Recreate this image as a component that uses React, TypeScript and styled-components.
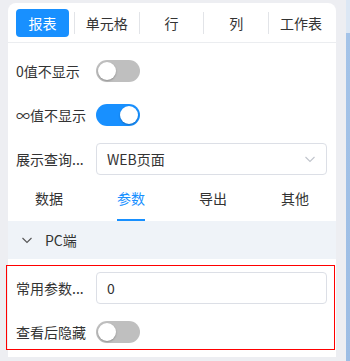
import React, { useState } from 'react';
import styled, { createGlobalStyle } from 'styled-components';

const GlobalStyle = createGlobalStyle`
  html, body {
    margin: 0;
    padding: 0;
    background: #edeef2;
    font-family: "Noto Sans CJK SC", "Noto Sans", sans-serif;
    font-size: 14px;
    color: #333;
  }
`;

const Page = styled.div`
  display: flex;
  height: 361px;
  padding: 3px 0 0 8px;
  box-sizing: border-box;
  overflow: hidden;
`;

const Card = styled.div`
  width: 328px;
  height: 354px;
  background: #fff;
  border-radius: 8px 8px 0 0;
  flex-shrink: 0;
`;

const Strip = styled.div`
  width: 4px;
  margin: -3px 0 0 10px;
  background: linear-gradient(#dce7f4 0, #dce7f4 33px, #a4c3e8 33px, #9dbde4 100%);
`;

const TopTabs = styled.div`
  display: flex;
  align-items: center;
  height: 39px;
  padding: 0 3px 0 1px;
  border-bottom: 1px solid #ebedf0;
`;

const TabCell = styled.div<{ $active?: boolean; $divider?: boolean }>`
  flex: 0 0 20%;
  box-sizing: border-box;
  height: ${({ $active }) => ($active ? '28px' : '22px')};
  padding: ${({ $active }) => ($active ? '0 5px 0 7px' : '0')};
  display: flex;
  border-left: ${({ $divider }) => ($divider ? '1px solid #e2e4e8' : 'none')};
`;

const TabButton = styled.div<{ $active?: boolean }>`
  flex: 1;
  display: flex;
  align-items: center;
  justify-content: center;
  border-radius: 4px;
  background: ${({ $active }) => ($active ? '#1890ff' : 'transparent')};
  color: ${({ $active }) => ($active ? '#fff' : '#333')};
`;

const Form = styled.div`
  padding: 12px 9px 0 8px;
`;

const Row = styled.div<{ $last?: boolean }>`
  display: flex;
  align-items: center;
  height: 32px;
  margin-bottom: ${({ $last }) => ($last ? '0' : '12px')};
`;

const Label = styled.div`
  width: 72px;
  margin-right: 8px;
  white-space: nowrap;
`;

const SwitchTrack = styled.button<{ $on: boolean }>`
  position: relative;
  width: 44px;
  height: 22px;
  border: none;
  padding: 0;
  border-radius: 11px;
  background: ${({ $on }) => ($on ? '#1890ff' : '#bfbfbf')};
  cursor: pointer;
`;

const Knob = styled.span<{ $on: boolean }>`
  position: absolute;
  top: 2px;
  left: ${({ $on }) => ($on ? '24px' : '2px')};
  width: 18px;
  height: 18px;
  border-radius: 50%;
  background: #fff;
  box-shadow: 0 1px 2px rgba(0, 0, 0, 0.25);
`;

const Field = styled.div`
  flex: 1;
  height: 32px;
  box-sizing: border-box;
  border: 1px solid #dcdfe6;
  border-radius: 4px;
  display: flex;
  align-items: center;
  justify-content: space-between;
  padding: 0 10px;
  color: #333;
`;

const SubTabs = styled.div`
  display: flex;
  height: 44px;
  margin-top: -10px;
`;

const SubTab = styled.div`
  flex: 1;
  display: flex;
  justify-content: center;
`;

const SubTabLabel = styled.span<{ $active?: boolean }>`
  display: flex;
  align-items: center;
  color: ${({ $active }) => ($active ? '#1890ff' : '#333')};
  border-bottom: 2px solid ${({ $active }) => ($active ? '#1890ff' : 'transparent')};
`;

const GroupHead = styled.div`
  display: flex;
  align-items: center;
  height: 38px;
  padding-left: 13px;
  background: #eff3f8;
  gap: 12px;
`;

const ParamSection = styled.div`
  position: relative;
  padding: 13px 9px 10px 8px;

  &::after {
    content: '';
    position: absolute;
    top: 6px;
    left: -2px;
    right: 1px;
    bottom: 8px;
    border: 1px solid #f00;
    pointer-events: none;
  }
`;

const Chevron = ({ size = 12, color = '#c0c4cc' }: { size?: number; color?: string }) => (
  <svg width={size} height={size} viewBox="0 0 12 12" fill="none">
    <path d="M1.5 4l4.5 4.5L10.5 4" stroke={color} strokeWidth="1.1" />
  </svg>
);

const Switch = ({ initial }: { initial: boolean }) => {
  const [on, setOn] = useState(initial);
  return (
    <SwitchTrack $on={on} onClick={() => setOn(!on)}>
      <Knob $on={on} />
    </SwitchTrack>
  );
};

const topTabs = ['报表', '单元格', '行', '列', '工作表'];
const subTabs = ['数据', '参数', '导出', '其他'];

export default function App() {
  return (
    <>
      <GlobalStyle />
      <Page>
        <Card>
          <TopTabs>
            {topTabs.map((t, i) => (
              <TabCell key={t} $active={i === 0} $divider={i > 0}>
                <TabButton $active={i === 0}>{t}</TabButton>
              </TabCell>
            ))}
          </TopTabs>
          <Form>
            <Row>
              <Label>0值不显示</Label>
              <Switch initial={false} />
            </Row>
            <Row>
              <Label>∞值不显示</Label>
              <Switch initial={true} />
            </Row>
            <Row>
              <Label>展示查询...</Label>
              <Field>
                WEB页面
                <Chevron />
              </Field>
            </Row>
          </Form>
          <SubTabs>
            {subTabs.map((t) => (
              <SubTab key={t}>
                <SubTabLabel $active={t === '参数'}>{t}</SubTabLabel>
              </SubTab>
            ))}
          </SubTabs>
          <GroupHead>
            <Chevron color="#555" />
            PC端
          </GroupHead>
          <ParamSection>
            <Row>
              <Label>常用参数...</Label>
              <Field>0</Field>
            </Row>
            <Row $last>
              <Label>查看后隐藏</Label>
              <Switch initial={false} />
            </Row>
          </ParamSection>
        </Card>
        <Strip />
      </Page>
    </>
  );
}
